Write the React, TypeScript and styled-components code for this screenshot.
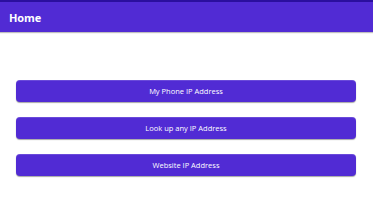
import styled, { createGlobalStyle } from 'styled-components';

const GlobalStyle = createGlobalStyle`
	html, body {
		margin: 0;
		padding: 0;
		background: #fff;
		font-family: "Open Sans", "Noto Sans", sans-serif;
	}
`;

const buttons = ['My Phone IP Address', 'Look up any IP Address', 'Website IP Address'];

export default function App() {
	return (
		<>
			<GlobalStyle />
			<Page>
				<StatusBar />
				<Header>
					<Title>Home</Title>
				</Header>
				<ButtonList>
					{buttons.map(label => (
						<MenuButton key={label}>{label}</MenuButton>
					))}
				</ButtonList>
			</Page>
		</>
	);
}

const Page = styled.div`
	width: 373px;
	height: 200px;
	display: flex;
	flex-direction: column;
	background: #fff;
`;

const StatusBar = styled.div`
	height: 2px;
	background: #2b0f9e;
`;

const Header = styled.div`
	height: 30px;
	display: flex;
	align-items: center;
	padding: 0 9px;
	background: #512bd4;
	box-shadow: 0 1px 1px rgba(0, 0, 0, 0.25);
`;

const Title = styled.div`
	color: #fff;
	font-size: 11px;
	font-weight: 700;
	letter-spacing: -0.1px;
`;

const ButtonList = styled.div`
	display: flex;
	flex-direction: column;
	gap: 15px;
	padding: 48px 17px 0 16px;
`;

const MenuButton = styled.button`
	height: 22px;
	border: none;
	border-radius: 4px;
	background: #512bd4;
	color: #fff;
	font-family: "Open Sans", "Noto Sans", sans-serif;
	font-size: 7.5px;
	box-shadow: 0 1px 1px rgba(0, 0, 0, 0.35), inset 0 1px 0 rgba(255, 255, 255, 0.15);
	cursor: pointer;
`;
